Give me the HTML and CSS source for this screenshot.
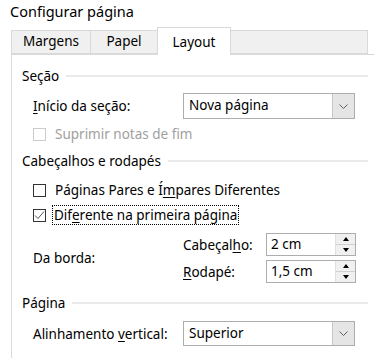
FILE: index.html
```html
<!DOCTYPE html>
<html lang="pt">
<head>
    <meta charset="UTF-8">
    <title>Configurar página</title>
    <link rel="stylesheet" href="styles.css">
</head>
<body>
    <div class="title">Configurar página</div>

    <div class="tabs">
        <div class="tab">Margens</div>
        <div class="tab">Papel</div>
        <div class="tab active">Layout</div>
        <div class="tab-fill"></div>
    </div>

    <div class="panel">
        <!-- Seção -->
        <div class="group-head">Seção<span class="rule"></span></div>
        <div class="row row-select">
            <div class="label"><u>I</u>nício da seção:</div>
            <div class="select">
                <span class="select-value">Nova página</span>
                <span class="select-btn">
                    <svg width="9" height="5" viewBox="0 0 9 5"><path d="M0.5 0.5 L4.5 4.5 L8.5 0.5" fill="none" stroke="#606060" stroke-width="1"/></svg>
                </span>
            </div>
        </div>
        <div class="row row-check disabled">
            <span class="check"></span>
            <span>Suprimir notas de fim</span>
        </div>

        <!-- Cabeçalhos e rodapés -->
        <div class="group-head head-2">Cabeçalhos e rodapés<span class="rule"></span></div>
        <div class="row row-check first">
            <span class="check"></span>
            <span>Páginas Pares e Í<u>m</u>pares Diferentes</span>
        </div>
        <div class="row row-check">
            <span class="check checked">
                <svg width="11" height="11" viewBox="0 0 11 11"><path d="M1 5.5 L4 8.5 L10 1.5" fill="none" stroke="#555" stroke-width="1"/></svg>
            </span>
            <span class="focus">Dif<u>e</u>rente na primeira página</span>
        </div>
        <div class="row borda">
            <div class="label">Da borda:</div>
            <div class="spins">
                <div class="spin-row">
                    <div class="spin-label">Cabeçal<u>h</u>o:</div>
                    <div class="spin">
                        <span class="spin-value">2 cm</span>
                        <span class="spin-btns"><span class="up"></span><span class="down"></span></span>
                    </div>
                </div>
                <div class="spin-row">
                    <div class="spin-label"><u>R</u>odapé:</div>
                    <div class="spin">
                        <span class="spin-value">1,5 cm</span>
                        <span class="spin-btns"><span class="up"></span><span class="down"></span></span>
                    </div>
                </div>
            </div>
        </div>

        <!-- Página -->
        <div class="group-head head-3">Página<span class="rule"></span></div>
        <div class="row row-select last">
            <div class="label">Alinhamento <u>v</u>ertical:</div>
            <div class="select">
                <span class="select-value">Superior</span>
                <span class="select-btn">
                    <svg width="9" height="5" viewBox="0 0 9 5"><path d="M0.5 0.5 L4.5 4.5 L8.5 0.5" fill="none" stroke="#606060" stroke-width="1"/></svg>
                </span>
            </div>
        </div>
    </div>
</body>
</html>
```

FILE: styles.css
```css
body {
    margin: 0;
    padding: 0;
    background-color: #ffffff;
    font-family: 'Noto Sans', 'Open Sans', sans-serif;
    font-size: 13.5px;
    color: #000000;
    overflow: hidden;
}

u {
    text-decoration: underline;
    text-underline-offset: 2px;
}

.title {
    font-size: 14.5px;
    height: 27px;
    line-height: 22px;
    padding-left: 10px;
}

/* Tab strip */
.tabs {
    display: flex;
    align-items: flex-end;
    height: 27px;
    margin-left: 11px;
    margin-right: 6px;
}

.tab {
    height: 22px;
    line-height: 21px;
    background-color: #f0f0f0;
    border: 1px solid #d9d9d9;
    border-right: none;
    text-align: center;
}

.tab:nth-child(1) {
    width: 78px;
}

.tab:nth-child(2) {
    width: 66px;
}

.tab.active {
    width: 72px;
    height: 27px;
    line-height: 29px;
    background-color: #ffffff;
    border-bottom: none;
    border-right: 1px solid #d9d9d9;
    position: relative;
    top: 1px;
}

.tab-fill {
    flex: 1;
    height: 22px;
    background-color: #f0f0f0;
    border: 1px solid #d9d9d9;
    border-left: none;
}

/* Content panel */
.panel {
    margin-left: 11px;
    border-left: 1px solid #d9d9d9;
    border-top: 1px solid #d9d9d9;
    padding: 11px 6px 20px 10px;
}

.group-head {
    display: flex;
    align-items: center;
    height: 20px;
    white-space: nowrap;
}

.rule {
    flex: 1;
    height: 2px;
    background-color: #eaeaea;
    margin-left: 7px;
}

.head-2 {
    margin-top: 7px;
}

.head-3 {
    margin-top: 10px;
}

.row {
    display: flex;
    align-items: center;
    padding-left: 11px;
}

.label {
    width: 150px;
    flex-shrink: 0;
}

.row-select {
    margin-top: 7px;
    height: 26px;
}

.row-select.last {
    margin-top: 8px;
    height: 25px;
}

.select {
    display: flex;
    width: 172px;
    height: 100%;
    box-sizing: border-box;
    border: 1px solid #adadad;
}

.select-value {
    flex: 1;
    padding-left: 5px;
    line-height: 23px;
}

.select-btn {
    width: 21px;
    display: flex;
    align-items: center;
    justify-content: center;
    background-color: #e5e5e5;
    border-left: 1px solid #c8c8c8;
}

.row-check {
    height: 20px;
    margin-top: 5px;
}

.row-check.first {
    margin-top: 9px;
}

.check {
    width: 13px;
    height: 13px;
    box-sizing: border-box;
    border: 1px solid #333333;
    margin-right: 9px;
    display: flex;
    align-items: center;
    justify-content: center;
    flex-shrink: 0;
}

.disabled {
    color: #a0a0a0;
}

.disabled .check {
    border-color: #cccccc;
}

.focus {
    outline: 1px dotted #000000;
    outline-offset: 0;
    padding: 0 1px;
    margin-left: -2px;
    line-height: 18px;
}

/* Da borda spin boxes */
.borda {
    margin-top: 8px;
}

.spins {
    display: flex;
    flex-direction: column;
    gap: 4px;
}

.spin-row {
    display: flex;
    align-items: center;
}

.spin-label {
    width: 83px;
}

.spin {
    display: flex;
    width: 90px;
    height: 23px;
    box-sizing: border-box;
    border: 1px solid #adadad;
}

.spin-value {
    flex: 1;
    padding-left: 4px;
    line-height: 21px;
}

.spin-btns {
    width: 19px;
    display: flex;
    flex-direction: column;
    background-color: #f0f0f0;
    border-left: 1px solid #e0e0e0;
}

.spin-btns span {
    flex: 1;
    display: flex;
    align-items: center;
    justify-content: center;
}

.spin-btns .up {
    border-bottom: 1px solid #d0d0d0;
}

.spin-btns .up:before {
    content: '';
    border-left: 3px solid transparent;
    border-right: 3px solid transparent;
    border-bottom: 4px solid #000000;
}

.spin-btns .down:before {
    content: '';
    border-left: 3px solid transparent;
    border-right: 3px solid transparent;
    border-top: 4px solid #000000;
}
```
